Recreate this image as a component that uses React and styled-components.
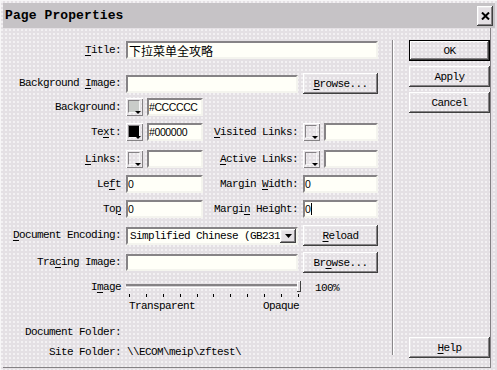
import React from 'react';
import styled, { createGlobalStyle } from 'styled-components';

const MONO = `"Liberation Mono", "Courier New", monospace`;
const SANS = `"Liberation Sans", Arial, sans-serif`;
const CJK = `"Liberation Sans", "Noto Sans CJK SC", sans-serif`;

const GlobalStyle = createGlobalStyle`
  html, body {
    margin: 0;
    padding: 0;
    background: #E4E0E4;
  }
  body {
    width: 497px;
    height: 370px;
    overflow: hidden;
  }
`;

const Window = styled.div`
  width: 497px;
  height: 370px;
  box-sizing: border-box;
  padding: 3px 6px 2px 3px;
  display: flex;
  flex-direction: column;
  background-color: #E4E0E4;
  background-image: radial-gradient(circle, #F3F1F3 0.8px, transparent 1px);
  background-size: 4px 4px;
  box-shadow: inset 1px 1px 0 #F7F6F7;
  font-family: ${MONO};
  font-size: 11px;
  letter-spacing: -0.6px;
  color: #000;
`;

const TitleBar = styled.div`
  height: 25px;
  margin-right: -4px;
  padding: 0 2px 0 2px;
  display: flex;
  align-items: center;
  justify-content: space-between;
  background: #C6C3C6;
`;

const Caption = styled.span`
  font: bold 13px ${MONO};
  letter-spacing: 0.1px;
`;

const raised = `
  box-shadow: inset -1px -1px #404040, inset 1px 1px #FFFFFF,
    inset -2px -2px #858285, inset 2px 2px #ECEAEC;
`;

const CloseBtn = styled.div`
  width: 16px;
  height: 20px;
  box-sizing: border-box;
  display: flex;
  align-items: center;
  justify-content: center;
  background: #E4E0E4;
  ${raised}
`;

const Body = styled.div`
  flex: 1;
  display: flex;
  border-right: 1px solid #858285;
  border-bottom: 1px solid #858285;
`;

const FormPane = styled.div`
  width: 389px;
  display: flex;
  flex-direction: column;
`;

const Separator = styled.div`
  width: 1px;
  margin: 12px 0;
  background: #8A878A;
  border-right: 1px solid #FFFFFF;
`;

const ButtonPane = styled.div`
  flex: 1;
  display: flex;
  flex-direction: column;
  gap: 5px;
  padding: 12px 0 9px 15px;
`;

const Row = styled.div`
  display: grid;
  grid-template-columns: 118px 77px 90px 75px;
  column-gap: 5px;
  align-items: ${p => p.$align || 'center'};
  height: ${p => p.$h}px;
  margin-top: ${p => p.$mt}px;
`;

const Label = styled.span`
  grid-column: ${p => p.$col || 'auto'};
  text-align: right;
  white-space: nowrap;
  line-height: 13px;
  margin-top: ${p => p.$mt || 0}px;
`;

const Key = styled.u`
  text-decoration: underline;
  text-underline-offset: 2px;
`;

const fonts = { sans: SANS, mono: MONO, cjk: CJK };

const Field = styled.div`
  grid-column: ${p => p.$span || 'auto'};
  flex: ${p => (p.$grow ? 1 : 'none')};
  min-width: 0;
  height: ${p => p.$h || 18}px;
  box-sizing: border-box;
  border: 2px solid;
  border-color: #868386 #F4F4EE #F4F4EE #868386;
  background: #FFFFF8;
  display: flex;
  align-items: center;
  padding: 0 0 0 ${p => (p.$font === 'cjk' ? 1 : 0)}px;
  overflow: hidden;
  white-space: nowrap;
  font-family: ${p => fonts[p.$font || 'sans']};
  font-size: ${p => (p.$font === 'cjk' ? 12 : p.$font === 'mono' ? 11 : 10.5)}px;
  letter-spacing: ${p => (p.$font === 'mono' ? '-0.6px' : p.$font === 'cjk' ? '0' : '-0.4px')};
`;

const Caret = styled.span`
  width: 1px;
  height: 12px;
  background: #000;
  margin-left: 1px;
`;

const Button = styled.div`
  grid-column: ${p => p.$col || 'auto'};
  height: 21px;
  box-sizing: border-box;
  display: flex;
  align-items: center;
  justify-content: center;
  padding-top: 1px;
  ${raised}
  ${p => p.$default && 'outline: 1px solid #000; outline-offset: -1px; box-shadow: inset -2px -2px #404040, inset 2px 2px #FFFFFF, inset -3px -3px #858285;'}
`;

const ColorCell = styled.div`
  grid-column: ${p => p.$col || 'auto'};
  display: flex;
  align-items: center;
  gap: 4px;
`;

const Swatch = styled.div`
  position: relative;
  flex: none;
  width: 17px;
  height: 18px;
  box-sizing: border-box;
  padding: 2px;
  box-shadow: inset 1px 1px #FFFFFF, inset -1px -1px #858285;
`;

const SwatchFill = styled.div`
  width: 12px;
  height: 13px;
  box-sizing: border-box;
  border: 1px solid;
  border-color: #858285 #F6F6F6 #F6F6F6 #858285;
  background: ${p => p.$color || 'transparent'};
`;

const SwatchArrow = styled.span`
  position: absolute;
  right: 2px;
  bottom: 2px;
  width: 0;
  height: 0;
  border-left: 3px solid transparent;
  border-right: 3px solid transparent;
  border-top: 3px solid #000;
`;

const Select = styled(Field)`
  padding: 0 0 0 2px;
  justify-content: space-between;
`;

const DropBtn = styled.div`
  width: 16px;
  height: 14px;
  flex: none;
  box-sizing: border-box;
  display: flex;
  align-items: center;
  justify-content: center;
  background: #E4E0E4;
  ${raised}
`;

const SliderCell = styled.div`
  grid-column: 2 / 4;
  display: flex;
  flex-direction: column;
  margin-right: -3px;
`;

const Track = styled.div`
  position: relative;
  height: 4px;
  margin-top: 4px;
  box-sizing: border-box;
  border-top: 2px solid #858285;
  border-bottom: 1px solid #FFFFFF;
  background: #D6D3D6;
`;

const Thumb = styled.div`
  position: absolute;
  right: 0;
  top: -5px;
  width: 4px;
  height: 11px;
  background: #E4E0E4;
  box-shadow: inset -1px -1px #404040, inset 1px 1px #FFFFFF;
`;

const Ticks = styled.div`
  display: flex;
  justify-content: space-between;
  margin-top: 6px;
  padding: 0 2px 0 3px;
`;

const Tick = styled.span`
  width: 1px;
  height: 3px;
  background: #000;
`;

const ScaleLabels = styled.div`
  display: flex;
  justify-content: space-between;
  margin-top: 3px;
  padding: 0 2px 0 3px;
  line-height: 12px;
`;

const Percent = styled.span`
  padding-left: 12px;
  margin-top: 2px;
  line-height: 13px;
`;

const Value = styled.span`
  grid-column: 2 / 5;
  line-height: 13px;
  white-space: nowrap;
  padding-left: 1px;
`;

const Help = styled(Button)`
  margin-top: auto;
`;

const Color = ({ color, col, value }) => (
  <ColorCell $col={col}>
    <Swatch>
      <SwatchFill $color={color} />
      <SwatchArrow />
    </Swatch>
    <Field $grow>{value}</Field>
  </ColorCell>
);

const App = () => (
  <>
    <GlobalStyle />
    <Window>
      <TitleBar>
        <Caption>Page Properties</Caption>
        <CloseBtn>
          <svg width="9" height="8" viewBox="0 0 9 8">
            <path d="M1 0.5 L8 7.5 M8 0.5 L1 7.5" stroke="#000" strokeWidth="2" />
          </svg>
        </CloseBtn>
      </TitleBar>
      <Body>
        <FormPane>
          <Row $h={18} $mt={13}>
            <Label><Key>T</Key>itle:</Label>
            <Field $span="2 / 5" $font="cjk">下拉菜单全攻略</Field>
          </Row>
          <Row $h={21} $mt={14}>
            <Label>Background <Key>I</Key>mage:</Label>
            <Field $span="2 / 4" />
            <Button><Key>B</Key>rowse...</Button>
          </Row>
          <Row $h={18} $mt={4}>
            <Label>Background:</Label>
            <Color color="#C9CCC9" value="#CCCCCC" />
          </Row>
          <Row $h={18} $mt={7}>
            <Label>Te<Key>x</Key>t:</Label>
            <Color color="#000000" value="#000000" />
            <Label><Key>V</Key>isited Links:</Label>
            <Color />
          </Row>
          <Row $h={18} $mt={9}>
            <Label><Key>L</Key>inks:</Label>
            <Color />
            <Label><Key>A</Key>ctive Links:</Label>
            <Color />
          </Row>
          <Row $h={18} $mt={7}>
            <Label>Le<Key>f</Key>t</Label>
            <Field>0</Field>
            <Label>Margin <Key>W</Key>idth:</Label>
            <Field>0</Field>
          </Row>
          <Row $h={18} $mt={7}>
            <Label>To<Key>p</Key></Label>
            <Field>0</Field>
            <Label>Margi<Key>n</Key> Height:</Label>
            <Field>0<Caret /></Field>
          </Row>
          <Row $h={21} $mt={7}>
            <Label><Key>D</Key>ocument Encoding:</Label>
            <Select $span="2 / 4" $font="mono">
              <span>Simplified Chinese (GB231</span>
              <DropBtn>
                <svg width="7" height="4" viewBox="0 0 7 4">
                  <path d="M0 0 H7 L3.5 4 Z" fill="#000" />
                </svg>
              </DropBtn>
            </Select>
            <Button><Key>R</Key>eload</Button>
          </Row>
          <Row $h={20} $mt={6}>
            <Label>Tra<Key>c</Key>ing Image:</Label>
            <Field $span="2 / 4" $h={17} />
            <Button>Br<Key>o</Key>wse...</Button>
          </Row>
          <Row $h={32} $mt={8} $align="start">
            <Label $mt={1}>I<Key>m</Key>age</Label>
            <SliderCell>
              <Track>
                <Thumb />
              </Track>
              <Ticks>
                {Array.from({ length: 11 }).map((_, i) => <Tick key={i} />)}
              </Ticks>
              <ScaleLabels>
                <span>Transparent</span>
                <span>Opaque</span>
              </ScaleLabels>
            </SliderCell>
            <Percent>100%</Percent>
          </Row>
          <Row $h={14} $mt={13}>
            <Label>Document Folder:</Label>
          </Row>
          <Row $h={14} $mt={6}>
            <Label>Site Folder:</Label>
            <Value>\\ECOM\meip\zftest\</Value>
          </Row>
        </FormPane>
        <Separator />
        <ButtonPane>
          <Button $default>OK</Button>
          <Button>Apply</Button>
          <Button>Cancel</Button>
          <Help><Key>H</Key>elp</Help>
        </ButtonPane>
      </Body>
    </Window>
  </>
);

export default App;
